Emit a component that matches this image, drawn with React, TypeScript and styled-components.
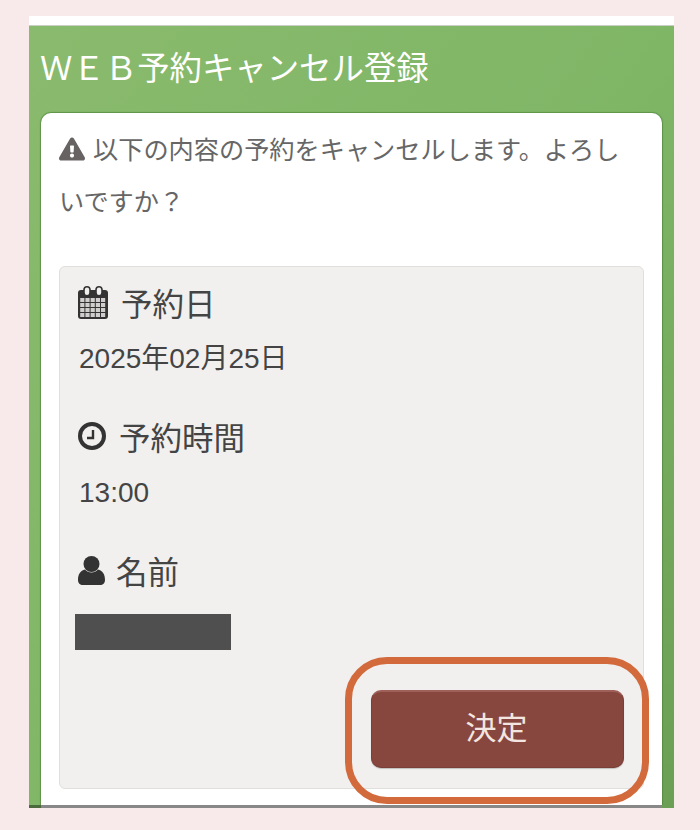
import * as React from 'react'
import styled, { createGlobalStyle } from 'styled-components'
import { FaExclamationTriangle } from 'react-icons/fa'

const GlobalStyle = createGlobalStyle`
    html, body {
        margin: 0;
        padding: 0;
        background: #f8eaea;
        font-family: "Liberation Sans", "Noto Sans CJK JP", sans-serif;
    }
`

const Phone = styled('div')`
    display: flex;
    flex-flow: column nowrap;
    width: 645px;
    height: 792px;
    margin: 16px 0 22px 29px;
    overflow: hidden;
    background: #fff;
`

const TopEdge = styled('div')`
    height: 9px;
    flex: none;
    background: #fff;
    border-bottom: 1px solid #c8cfc4;
`

const Screen = styled('div')`
    display: flex;
    flex-flow: column nowrap;
    flex: 1;
    min-height: 0;
    background: linear-gradient(125deg, #8aba6d 0%, #7fb666 55%, #6b9f54 100%);
`

const Title = styled('h1')`
    flex: none;
    height: 87px;
    margin: 0;
    padding: 0 0 8px 11px;
    box-sizing: border-box;
    display: flex;
    align-items: center;
    color: #fff;
    font-size: 32.4px;
    font-weight: 400;
    white-space: nowrap;
`

const Card = styled('div')`
    display: flex;
    flex-flow: column nowrap;
    flex: 1;
    min-height: 0;
    margin: 0 12px;
    padding: 11px 18px 16px;
    background: #fff;
    border-radius: 10px 10px 0 0;
    box-shadow: 0 -1px 1px #5f9548, -1px 0 1px rgba(80, 130, 60, .7), 1px 0 1px rgba(80, 130, 60, .7);
`

const Alert = styled('p')`
    margin: 0 0 38px;
    padding-right: 20px;
    color: #666;
    font-size: 25.2px;
    line-height: 52px;
    svg {
        width: 26px;
        height: 26px;
        margin-right: 8px;
        vertical-align: -3px;
        color: #676363;
    }
`

const Panel = styled('div')`
    display: flex;
    flex-flow: column nowrap;
    flex: 1;
    min-height: 0;
    padding: 15px 19px 20px 20px;
    background: #f1f0ef;
    border: 1px solid #e0dfdc;
    border-radius: 6px;
`

const Section = styled('section')`
    margin-bottom: 37px;
    &:last-of-type {
        margin-bottom: 0;
    }
`

const Heading = styled('h2')<{ $gap: number }>`
    display: flex;
    align-items: center;
    gap: ${props => props.$gap}px;
    height: 40px;
    margin: 0 0 17px -2px;
    color: #444;
    font-size: 31.5px;
    font-weight: 400;
    svg {
        flex: none;
        color: #333;
    }
`

const Value = styled('div')`
    height: 40px;
    margin-left: -1px;
    color: #444;
    font-size: 28px;
    line-height: 40px;
    white-space: nowrap;
`

const Redacted = styled('div')`
    width: 156px;
    height: 36px;
    margin: 24px 0 0 -5px;
    background: #4f4f4f;
`

const ButtonWrap = styled('div')`
    position: relative;
    align-self: flex-end;
    margin-top: auto;
`

const SubmitButton = styled('button')`
    display: block;
    width: 253px;
    height: 78px;
    padding: 0 2px 8px 0;
    background: #87463e;
    border: 1px solid #7a3f38;
    border-top: 2px solid #a0605a;
    border-radius: 10px;
    box-shadow: 0 1px 1px rgba(0, 0, 0, .2);
    color: #f3e6e0;
    font-family: inherit;
    font-size: 31px;
`

const Ring = styled('div')`
    position: absolute;
    top: -33px;
    right: -25px;
    bottom: -36px;
    left: -26px;
    border: 7px solid #d26a3b;
    border-radius: 42px;
    pointer-events: none;
`

const BottomEdge = styled('div')`
    flex: none;
    height: 3px;
    margin-right: 12px;
    background: linear-gradient(90deg, #4b6a3d 12px, #888 12px);
`

const gridCols = [0, 1, 2, 3, 4]
const gridRows = [0, 1, 2, 3]

const CalendarIcon = () => (
    <svg width="30" height="33" viewBox="0 0 30 33" aria-hidden="true">
        <rect y="4" width="30" height="29" rx="3" fill="currentColor" />
        {gridRows.map(row =>
            gridCols.map(col => (
                <rect
                    key={`${row}-${col}`}
                    x={2.2 + col * 5.2}
                    y={12 + row * 5}
                    width="4.2"
                    height="4"
                    fill="#cfcecd"
                />
            ))
        )}
        <rect x="6" y="0.800" width="6" height="9" rx="3" fill="#f1f0ef" stroke="currentColor" strokeWidth="1.600" />
        <rect x="18" y="0.800" width="6" height="9" rx="3" fill="#f1f0ef" stroke="currentColor" strokeWidth="1.600" />
    </svg>
)

const ClockIcon = () => (
    <svg width="28" height="28" viewBox="0 0 28 28" aria-hidden="true">
        <circle cx="14" cy="14" r="12" fill="none" stroke="currentColor" strokeWidth="4" />
        <path d="M15 8V16H9" fill="none" stroke="currentColor" strokeWidth="2.400" />
    </svg>
)

const UserIcon = () => (
    <svg width="27" height="29" viewBox="0 0 27 29" aria-hidden="true">
        <circle cx="13.500" cy="8" r="8" fill="currentColor" />
        <path
            fill="currentColor"
            d="M7 13.500c3 4 10 4 13 0 4.500 1 7 4.500 7 10.500 0 3-2 5-5 5H5c-3 0-5-2-5-5 0-6 2.500-9.500 7-10.500z"
        />
    </svg>
)

const App = () => (
    <>
        <GlobalStyle />
        <Phone>
            <TopEdge />
            <Screen>
                <Title>ＷＥＢ予約キャンセル登録</Title>
                <Card>
                    <Alert>
                        <FaExclamationTriangle />
                        以下の内容の予約をキャンセルします。よろしいですか？
                    </Alert>
                    <Panel>
                        <Section>
                            <Heading $gap={13}><CalendarIcon />予約日</Heading>
                            <Value>2025年02月25日</Value>
                        </Section>
                        <Section>
                            <Heading $gap={13}><ClockIcon />予約時間</Heading>
                            <Value>13:00</Value>
                        </Section>
                        <Section>
                            <Heading $gap={11}><UserIcon />名前</Heading>
                            <Redacted />
                        </Section>
                        <ButtonWrap>
                            <SubmitButton type="button">決定</SubmitButton>
                            <Ring />
                        </ButtonWrap>
                    </Panel>
                </Card>
                <BottomEdge />
            </Screen>
        </Phone>
    </>
)

export default App
